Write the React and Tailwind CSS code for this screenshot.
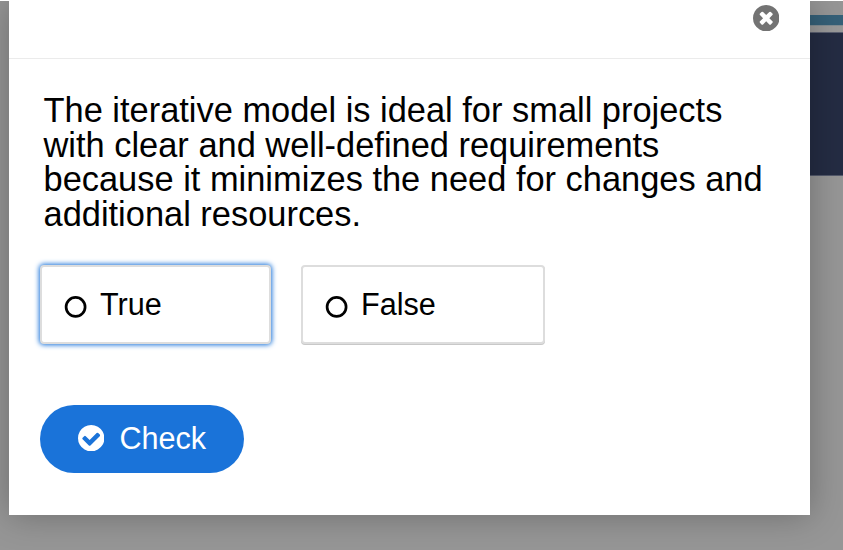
import React from "react";

function CloseIcon() {
  return (
    <svg viewBox="128 128 1536 1536" className="block size-[26.4px] fill-[#737373]" aria-hidden="true">
      <path d="M1277 1122q0-26-19-45l-181-181 181-181q19-19 19-45 0-27-19-46l-90-90q-19-19-46-19-26 0-45 19l-181 181-181-181q-19-19-45-19-27 0-46 19l-90 90q-19 19-19 46 0 26 19 45l181 181-181 181q-19 19-19 45 0 27 19 46l90 90q19 19 46 19 26 0 45-19l181-181 181 181q19 19 45 19 27 0 46-19l90-90q19-19 19-46zm387-226q0 209-103 385.5t-279.5 279.5-385.5 103-385.5-103-279.5-279.5-103-385.5 103-385.5 279.5-279.5 385.5-103 385.5 103 279.5 279.5 103 385.5z" />
    </svg>
  );
}

function CheckIcon() {
  return (
    <svg viewBox="128 128 1536 1536" className="-mt-0.5 block size-[26.4px] fill-white" aria-hidden="true">
      <path d="M1412 734q0-28-18-46l-91-90q-19-19-45-19t-45 19l-408 407-226-226q-19-19-45-19t-45 19l-91 90q-18 18-18 46 0 27 18 45l362 362q19 19 45 19 27 0 46-19l543-543q18-18 18-45zm252 162q0 209-103 385.5t-279.5 279.5-385.5 103-385.5-103-279.5-279.5-103-385.5 103-385.5 279.5-279.5 385.5-103 385.5 103 279.5 279.5 103 385.5z" />
    </svg>
  );
}

function Answer({ label, className }) {
  return (
    <div
      role="radio"
      aria-checked="false"
      className={
        "flex h-[79px] items-center rounded-[4px] border-2 border-[#dddddd] bg-white pl-[21.5px] text-[30.6px] leading-none text-black " +
        className
      }
    >
      <svg viewBox="0 0 24 24" className="mt-1 size-6 shrink-0" aria-hidden="true">
        <circle cx="11.6" cy="11.9" r="9.5" fill="none" stroke="black" strokeWidth="2.7" />
      </svg>
      <span className="mb-0.5 ml-[12.5px]">{label}</span>
    </div>
  );
}

export default function App() {
  return (
    <div className="relative h-[550px] w-[843px] overflow-hidden bg-white pt-px font-['Liberation_Sans',Arial,sans-serif]">
      <div className="flex h-[549px] flex-col items-end bg-[#969696]">
        <div className="h-[14px] w-10 shrink-0" />
        <div className="h-[10px] w-10 shrink-0 bg-[#356078]" />
        <div className="h-[8px] w-10 shrink-0 border-t border-b border-t-[#808c92] border-b-[#5a5f70] bg-[#999999]" />
        <div className="h-[143px] w-10 shrink-0 border-b border-[#53596b] bg-[#242c43]" />
      </div>

      <main className="absolute top-0 left-[9px] h-[515px] w-[801px] bg-white shadow-[0_0_33px_rgba(0,0,0,0.28)]">
        <header className="flex h-[59px] justify-end border-b border-[#ebebeb] pt-[4.8px] pr-[31px]">
          <button type="button" aria-label="Close" className="size-[26.4px]">
            <CloseIcon />
          </button>
        </header>
        <section className="pt-[34px] pl-[31px]">
          <p className="pl-[3.5px] text-[34.42px] leading-[34.6px] whitespace-nowrap text-black">
            The iterative model is ideal for small projects
            <br />
            with clear and well-defined requirements
            <br />
            because it minimizes the need for changes and
            <br />
            additional resources.
          </p>
          <div className="mt-[34px] flex gap-[30px]">
            <Answer label="True" className="w-[231px] shadow-[0_0_5px_1px_#1a73d9]" />
            <Answer label="False" className="w-[244px] shadow-[0_1px_0_#c8c8c8]" />
          </div>
          <button
            type="button"
            className="mt-[60.6px] flex h-[68px] w-[204px] items-center rounded-full bg-[#1a73d9] pl-[38px] text-[30.6px] leading-none text-white"
          >
            <CheckIcon />
            <span className="mb-0.5 ml-[15px]">Check</span>
          </button>
        </section>
      </main>
      <div className="absolute top-0 left-0 h-px w-full bg-white" />
    </div>
  );
}
